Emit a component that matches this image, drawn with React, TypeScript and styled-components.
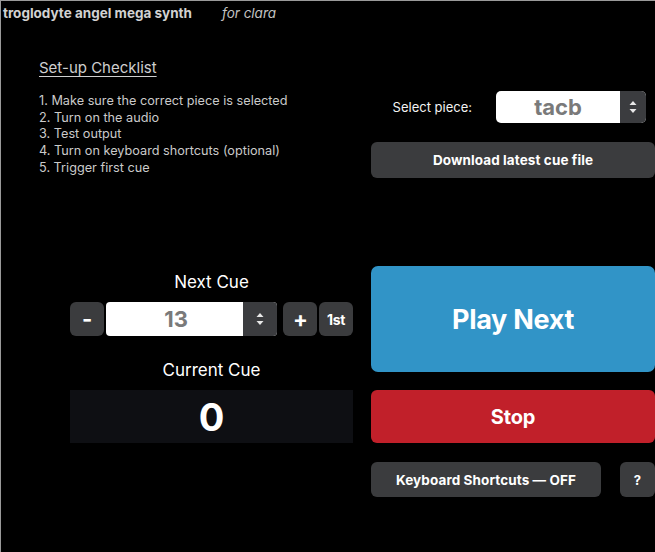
import styled, { createGlobalStyle } from 'styled-components';

const GlobalStyle = createGlobalStyle`
  html, body {
    margin: 0;
    padding: 0;
    background: #000;
  }

  body {
    font-family: Inter, 'Liberation Sans', Arial, sans-serif;
    color: #fff;
  }
`;

const checklist = [
  'Make sure the correct piece is selected',
  'Turn on the audio',
  'Test output',
  'Turn on keyboard shortcuts (optional)',
  'Trigger first cue',
];

const Arrows = () => (
  <svg width='8' height='14' viewBox='0 0 8 14'>
    <path d='M4 1 L7.5 5 L0.5 5 Z' fill='#e8e8e8' />
    <path d='M4 13 L7.5 9 L0.5 9 Z' fill='#e8e8e8' />
  </svg>
);

const App = () => {
  return (
    <Page>
      <GlobalStyle />
      <Header>
        <AppTitle>troglodyte angel mega synth</AppTitle>
        <Dedication>for clara</Dedication>
      </Header>

      <TopSection>
        <Checklist>
          <ChecklistTitle>Set-up Checklist</ChecklistTitle>
          <StepList>
            {checklist.map((step, i) => (
              <li key={step}>
                {i + 1}. {step}
              </li>
            ))}
          </StepList>
        </Checklist>

        <PiecePanel>
          <SelectRow>
            <SelectLabel>Select piece:</SelectLabel>
            <SelectBox>
              <SelectValue>tacb</SelectValue>
              <Spinner $width={26}>
                <Arrows />
              </Spinner>
            </SelectBox>
          </SelectRow>
          <GreyButton $height={36}>Download latest cue file</GreyButton>
        </PiecePanel>
      </TopSection>

      <CueSection>
        <CueColumn>
          <CueLabel>Next Cue</CueLabel>
          <CueRow>
            <SquareButton $size={22}>-</SquareButton>
            <NumberBox>
              <NumberValue>13</NumberValue>
              <Spinner $width={34}>
                <Arrows />
              </Spinner>
            </NumberBox>
            <SquareButton $size={22} $gap={4}>
              +
            </SquareButton>
            <SquareButton $size={14}>1st</SquareButton>
          </CueRow>
          <CueLabel $top={24}>Current Cue</CueLabel>
          <CurrentCue>0</CurrentCue>
        </CueColumn>

        <ActionColumn>
          <PlayButton>Play Next</PlayButton>
          <StopButton>Stop</StopButton>
          <ShortcutRow>
            <GreyButton $height={35} $grow>
              Keyboard Shortcuts — OFF
            </GreyButton>
            <HelpButton>?</HelpButton>
          </ShortcutRow>
        </ActionColumn>
      </CueSection>
    </Page>
  );
};

const Page = styled.div`
  width: 655px;
  height: 552px;
  box-sizing: border-box;
  overflow: hidden;
  border-top: 1px solid #9a9a9a;
  border-left: 1px solid #9a9a9a;
  background: #000;
`;

const Header = styled.header`
  display: flex;
  align-items: baseline;
  gap: 30px;
  padding: 4px 0 0 2px;
  height: 27px;
  box-sizing: border-box;
`;

const AppTitle = styled.h1`
  margin: 0;
  font-size: 13.5px;
  font-weight: 700;
  letter-spacing: 0;
  color: #d2d2d2;
`;

const Dedication = styled.span`
  font-size: 13.5px;
  font-style: italic;
  color: #c4c4c4;
`;

const TopSection = styled.section`
  display: grid;
  grid-template-columns: 370px 284px;
`;

const Checklist = styled.div`
  padding: 31px 0 0 38px;
`;

const ChecklistTitle = styled.h2`
  margin: 0;
  font-size: 15px;
  font-weight: 400;
  line-height: 18px;
  color: #cfcfcf;
  text-decoration: underline;
  text-underline-offset: 3px;
  text-decoration-thickness: 1px;
`;

const StepList = styled.ol`
  list-style: none;
  margin: 16px 0 0;
  padding: 0;
  font-size: 12.7px;
  line-height: 16.7px;
  color: #cacaca;
`;

const PiecePanel = styled.div`
  display: flex;
  flex-direction: column;
  padding-top: 63px;
  gap: 19px;
`;

const SelectRow = styled.div`
  display: flex;
  align-items: center;
  justify-content: flex-end;
  gap: 24px;
  padding-right: 9px;
`;

const SelectLabel = styled.span`
  font-size: 13px;
  color: #f2f2f2;
`;

const SelectBox = styled.div`
  display: flex;
  width: 150px;
  height: 32px;
  border-radius: 5px;
  overflow: hidden;
  background: #fff;
`;

const SelectValue = styled.span`
  flex: 1;
  display: flex;
  align-items: center;
  justify-content: center;
  font-size: 22px;
  font-weight: 700;
  color: #7a7a7a;
`;

const Spinner = styled.span<{ $width: number }>`
  width: ${({ $width }) => $width}px;
  display: flex;
  align-items: center;
  justify-content: center;
  background: #3b3c3f;
`;

const GreyButton = styled.button<{ $height: number; $grow?: boolean }>`
  height: ${({ $height }) => $height}px;
  ${({ $grow }) => ($grow ? 'flex: 1;' : '')}
  border: none;
  border-radius: 6px;
  background: #3b3c3e;
  color: #fff;
  font-family: inherit;
  font-size: 13.5px;
  font-weight: 700;
  letter-spacing: 0.1px;
`;

const CueSection = styled.section`
  display: grid;
  grid-template-columns: 283px 284px;
  column-gap: 18px;
  padding: 88px 0 0 69px;
`;

const CueColumn = styled.div`
  display: flex;
  flex-direction: column;
  padding-top: 6px;
`;

const CueLabel = styled.div<{ $top?: number }>`
  margin-top: ${({ $top }) => $top ?? 0}px;
  font-size: 17px;
  line-height: 20px;
  text-align: center;
  color: #fff;
`;

const CueRow = styled.div`
  display: flex;
  align-items: stretch;
  gap: 2px;
  height: 34px;
  margin-top: 10px;
`;

const SquareButton = styled.button<{ $size: number; $gap?: number }>`
  width: 34px;
  margin-left: ${({ $gap }) => $gap ?? 0}px;
  padding: 0;
  border: none;
  border-radius: 6px;
  background: #3b3c3e;
  color: #fff;
  font-family: inherit;
  font-size: ${({ $size }) => $size}px;
  font-weight: 700;
  letter-spacing: -0.3px;
`;

const NumberBox = styled.div`
  display: flex;
  width: 173px;
  border-radius: 4px;
  overflow: hidden;
  background: #fff;
`;

const NumberValue = styled.span`
  flex: 1;
  display: flex;
  align-items: center;
  justify-content: center;
  padding-left: 3px;
  font-size: 22px;
  font-weight: 700;
  color: #7a7a7a;
`;

const CurrentCue = styled.div`
  margin-top: 10px;
  height: 53px;
  display: flex;
  align-items: center;
  justify-content: center;
  background: #0e0f13;
  font-size: 38px;
  font-weight: 700;
  color: #fff;
`;

const ActionColumn = styled.div`
  display: flex;
  flex-direction: column;
  gap: 18px;
`;

const PlayButton = styled.button`
  height: 106px;
  border: none;
  border-radius: 7px;
  background: #3194c7;
  color: #fff;
  font-family: inherit;
  font-size: 27px;
  font-weight: 700;
  letter-spacing: -0.3px;
`;

const StopButton = styled.button`
  height: 53px;
  border: none;
  border-radius: 6px;
  background: #c1202a;
  color: #fff;
  font-family: inherit;
  font-size: 20px;
  font-weight: 700;
  letter-spacing: -0.2px;
`;

const ShortcutRow = styled.div`
  display: flex;
  gap: 19px;
  margin-top: 1px;
`;

const HelpButton = styled.button`
  width: 35px;
  height: 35px;
  border: none;
  border-radius: 6px;
  background: #3b3c3e;
  color: #fff;
  font-family: inherit;
  font-size: 13px;
  font-weight: 700;
`;

export default App;
